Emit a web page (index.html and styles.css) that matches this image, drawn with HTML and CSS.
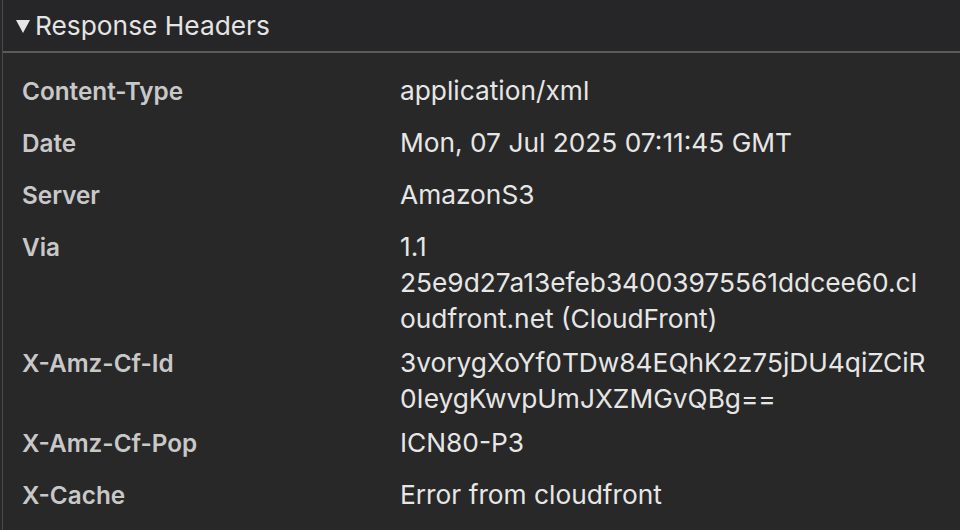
FILE: index.html
```html
<!DOCTYPE html>
<html>
<head>
<meta charset="utf-8">
<link rel="stylesheet" href="styles.css">
</head>
<body>
<div class="panel">
  <div class="section-header">
    <span class="disclosure"></span>
    <span class="title">Response Headers</span>
  </div>
  <div class="rows">
    <div class="row"><div class="key">Content-Type</div><div class="val">application/xml</div></div>
    <div class="row"><div class="key">Date</div><div class="val">Mon, 07 Jul 2025 07:11:45 GMT</div></div>
    <div class="row"><div class="key">Server</div><div class="val">AmazonS3</div></div>
    <div class="row"><div class="key">Via</div><div class="val">1.1<br>25e9d27a13efeb34003975561ddcee60.cl<br>oudfront.net (CloudFront)</div></div>
    <div class="row"><div class="key">X-Amz-Cf-Id</div><div class="val">3vorygXoYf0TDw84EQhK2z75jDU4qiZCiR<br>0IeygKwvpUmJXZMGvQBg==</div></div>
    <div class="row"><div class="key">X-Amz-Cf-Pop</div><div class="val">ICN80-P3</div></div>
    <div class="row"><div class="key">X-Cache</div><div class="val">Error from cloudfront</div></div>
  </div>
</div>
</body>
</html>
```

FILE: styles.css
```css
html, body {
  margin: 0;
  padding: 0;
  background: #282828;
  height: 100%;
  overflow: hidden;
}
body {
  font-family: Inter, "Noto Sans", "Liberation Sans", sans-serif;
  -webkit-font-smoothing: antialiased;
}
.panel {
  margin-left: 2px;
  border-left: 1px solid #4b4b4b;
  min-height: 530px;
  background: #282828;
}
.section-header {
  height: 53px;
  box-sizing: border-box;
  display: flex;
  align-items: center;
  padding-left: 13px;
  background: #262628;
  border-bottom: 2px solid #5b5b5b;
}
.disclosure {
  width: 0;
  height: 0;
  border-left: 7.5px solid transparent;
  border-right: 7.5px solid transparent;
  border-top: 13px solid #e6e6e6;
  margin-right: 5px;
  margin-top: 2px;
}
.title {
  color: #e4e4e4;
  font-size: 26.3px;
  line-height: 36px;
}
.rows {
  padding-top: 16px;
}
.row {
  display: flex;
  min-height: 52px;
  box-sizing: border-box;
  padding: 4px 0;
  line-height: 36px;
}
.key {
  width: 378px;
  padding-left: 19px;
  flex-shrink: 0;
  color: #c8c8c8;
  font-weight: 600;
  font-size: 24.3px;
}
.val {
  color: #e6e6e6;
  white-space: nowrap;
  font-size: 26.3px;
}
```
